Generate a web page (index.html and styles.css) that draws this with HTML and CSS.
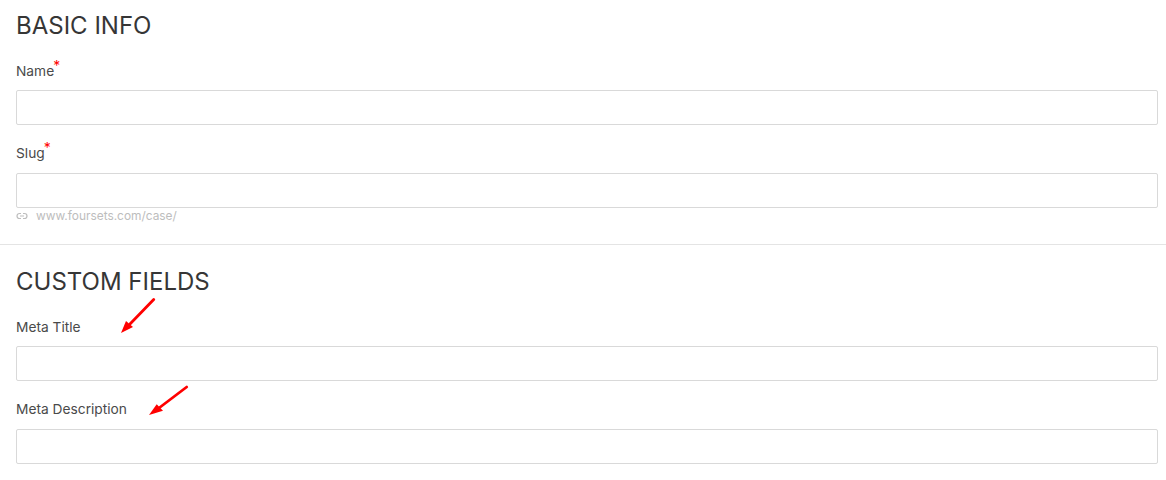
FILE: index.html
```html
<!DOCTYPE html>
<html lang="en">

<head>
    <meta charset="UTF-8">
    <meta name="viewport" content="width=device-width, initial-scale=1.0">
    <title>Case Form</title>
    <link rel="stylesheet" href="styles.css">
</head>

<body>
    <form class="case-form">
        <section class="form-section basic-info">
            <h2>BASIC INFO</h2>
            <div class="form-group">
                <label for="name">Name<span class="required">*</span></label>
                <input type="text" id="name">
            </div>
            <div class="form-group">
                <label for="slug">Slug<span class="required">*</span></label>
                <input type="text" id="slug">
                <div class="slug-hint">
                    <svg class="link-icon" viewBox="0 0 24 24" width="12" height="12" fill="none" stroke="#bdbdbd" stroke-width="2.4">
                        <path d="M10 7H7a5 5 0 0 0 0 10h3M14 7h3a5 5 0 0 1 0 10h-3M8 12h8" />
                    </svg>
                    <span>www.foursets.com/case/</span>
                </div>
            </div>
        </section>
        <section class="form-section custom-fields">
            <h2>CUSTOM FIELDS</h2>
            <div class="form-group">
                <label for="meta-title">Meta Title</label>
                <input type="text" id="meta-title">
                <svg class="arrow arrow-title" viewBox="0 0 36 36" width="36" height="36">
                    <path d="M33.7 1.5L10 26" stroke="#f00" stroke-width="2.8" stroke-linecap="round" fill="none" />
                    <path d="M1 35L6 23L13 29Z" fill="#f00" />
                </svg>
            </div>
            <div class="form-group">
                <label for="meta-desc">Meta Description</label>
                <input type="text" id="meta-desc">
                <svg class="arrow arrow-desc" viewBox="0 0 41 31" width="41" height="31">
                    <path d="M38.7 2L11 23" stroke="#f00" stroke-width="2.8" stroke-linecap="round" fill="none" />
                    <path d="M1 30L8.7 19.3L15 25.7Z" fill="#f00" />
                </svg>
            </div>
        </section>
    </form>
</body>

</html>
```

FILE: styles.css
```css
body {
    margin: 0;
    background-color: #fff;
    font-family: Inter, Roboto, Arial, sans-serif;
    color: #4a4a4a;
}

.form-section {
    padding: 0 8px 0 16px;
}

.basic-info {
    padding-top: 12px;
    padding-bottom: 2px;
    border-bottom: 1px solid #e4e4e4;
}

.custom-fields {
    padding-top: 23px;
}

.form-section h2 {
    margin: 0 0 21px;
    font-size: 24px;
    line-height: 28px;
    font-weight: 400;
    color: #363636;
}

.form-group {
    position: relative;
    margin-bottom: 18px;
}

.form-group label {
    display: block;
    margin-bottom: 10px;
    font-size: 13.75px;
    line-height: 20px;
}

h2 + .form-group label {
    margin-bottom: 9px;
}

.required {
    position: relative;
    top: -5px;
    margin-left: -1px;
    color: #f00;
    font-size: 14px;
}

.form-group input {
    display: block;
    width: 100%;
    height: 35px;
    box-sizing: border-box;
    border: 1px solid #d9d9d9;
    border-radius: 2px;
    background: #fff;
    outline: none;
}

.slug-hint {
    display: flex;
    align-items: center;
    gap: 8px;
    font-size: 11.9px;
    line-height: 16px;
    color: #bdbdbd;
}

.arrow {
    position: absolute;
}

.arrow-title {
    left: 104px;
    top: -19px;
}

.arrow-desc {
    left: 132px;
    top: -14px;
}
```
